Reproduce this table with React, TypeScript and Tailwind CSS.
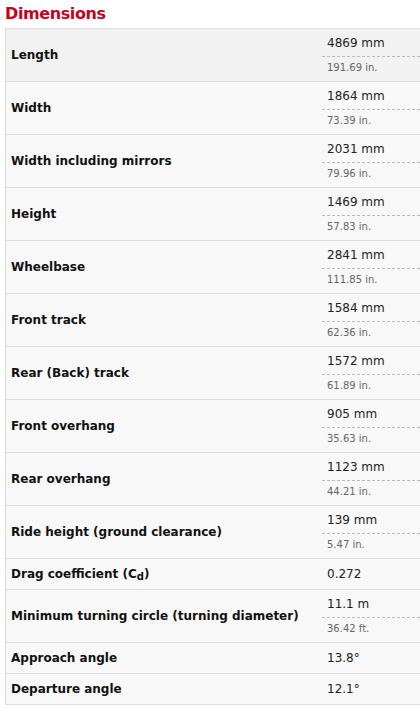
import React from "react";

type Row = { label: React.ReactNode; value: string; sub?: string };

const rows: Row[] = [
  { label: "Length", value: "4869 mm", sub: "191.69 in." },
  { label: "Width", value: "1864 mm", sub: "73.39 in." },
  { label: "Width including mirrors", value: "2031 mm", sub: "79.96 in." },
  { label: "Height", value: "1469 mm", sub: "57.83 in." },
  { label: "Wheelbase", value: "2841 mm", sub: "111.85 in." },
  { label: "Front track", value: "1584 mm", sub: "62.36 in." },
  { label: "Rear (Back) track", value: "1572 mm", sub: "61.89 in." },
  { label: "Front overhang", value: "905 mm", sub: "35.63 in." },
  { label: "Rear overhang", value: "1123 mm", sub: "44.21 in." },
  { label: "Ride height (ground clearance)", value: "139 mm", sub: "5.47 in." },
  {
    label: (
      <>
        Drag coefficient (C<sub className="text-[10px] relative top-[2px] align-baseline">d</sub>)
      </>
    ),
    value: "0.272",
  },
  { label: "Minimum turning circle (turning diameter)", value: "11.1 m", sub: "36.42 ft." },
  { label: "Approach angle", value: "13.8°" },
  { label: "Departure angle", value: "12.1°" },
];

export default function App() {
  return (
    <div
      className="w-[420px] h-[713px] overflow-hidden bg-white"
      style={{ fontFamily: '"DejaVu Sans", Verdana, sans-serif' }}
    >
      <h2 className="pt-[4px] pl-[5px] mb-[4px] text-[16px] leading-[20px] font-bold text-[#c8001e] tracking-[-0.4px]">
        Dimensions
      </h2>
      <div className="ml-[5px] w-[440px] border-t border-l border-[#dddddd]">
        {rows.map((r, i) => (
          <div
            key={i}
            className={`flex border-b border-[#dddddd] ${i === 0 ? "bg-[#f2f2f2]" : "bg-[#f8f8f8]"}`}
          >
            <div className="w-[316px] shrink-0 flex items-center pl-[5px] text-[12px] font-bold text-[#111] whitespace-nowrap">
              <span>{r.label}</span>
            </div>
            <div className="flex-1 text-[#222]">
              {r.sub ? (
                <>
                  <div className="pt-[5px] pb-[4px] pl-[5px] text-[12px] leading-[18px] border-b border-dashed border-[#bbbbbb]">
                    {r.value}
                  </div>
                  <div className="pt-[3px] pb-[6px] pl-[5px] text-[10px] leading-[15px] text-[#666]">
                    {r.sub}
                  </div>
                </>
              ) : (
                <div className="py-[6px] pl-[5px] text-[12px] leading-[18px]">{r.value}</div>
              )}
            </div>
          </div>
        ))}
      </div>
    </div>
  );
}
